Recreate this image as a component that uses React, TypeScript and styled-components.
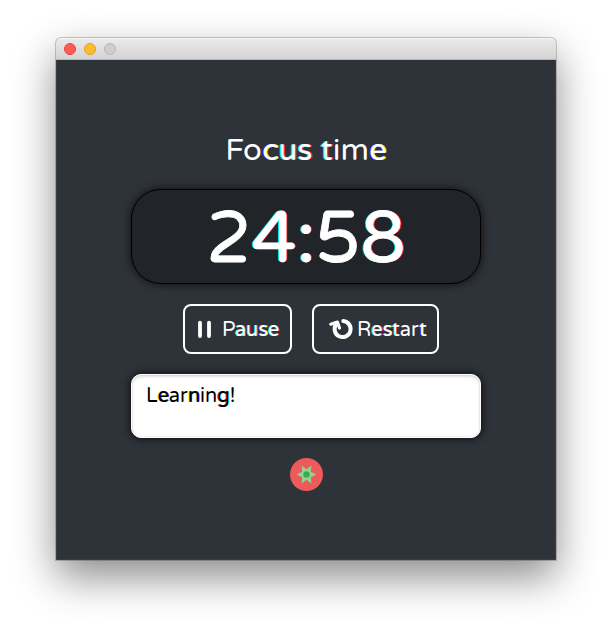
import React from "react";
import styled, { createGlobalStyle } from "styled-components";

const GlobalStyle = createGlobalStyle`
  * { box-sizing: border-box; }
  body {
    margin: 0;
    background: #fff;
    font-family: "Varela Round", Inter, "Open Sans", sans-serif;
    overflow: hidden;
  }
`;

const Desktop = styled.div`
  width: 612px;
  height: 634px;
  padding: 38px 56px 0;
  overflow: hidden;
`;

const Window = styled.main`
  width: 500px;
  height: 522px;
  border-radius: 5px 5px 0 0;
  background: #2e3239;
  box-shadow: 0 0 0 1px rgba(0, 0, 0, 0.2), 0 17px 42px rgba(0, 0, 0, 0.46);
`;

const TitleBar = styled.header`
  height: 22px;
  display: flex;
  align-items: center;
  gap: 8px;
  padding-left: 8px;
  border-radius: 5px 5px 0 0;
  border-bottom: 1px solid #b5b8b6;
  background: linear-gradient(#ebebeb, #d3d3d3);
  box-shadow: inset 0 1px 0 #f6f6f6;
`;

const TrafficLight = styled.span<{ $fill: string; $edge: string }>`
  width: 12px;
  height: 12px;
  border-radius: 50%;
  background: ${(p) => p.$fill};
  border: 1px solid ${(p) => p.$edge};
`;

const Content = styled.section`
  height: 500px;
  display: flex;
  flex-direction: column;
  align-items: center;
  border: solid rgba(255, 255, 255, 0.06);
  border-width: 0 1px 1px;
`;

const Heading = styled.h1`
  margin: 71px 0 0;
  height: 40px;
  line-height: 40px;
  font-size: 31px;
  font-weight: 400;
  letter-spacing: 0.1px;
  color: #fff;
  white-space: nowrap;
`;

const Timer = styled.div`
  width: 350px;
  height: 95px;
  margin-top: 18px;
  padding-top: 3px;
  border: 1px solid #000;
  border-radius: 30px;
  background: #212428;
  box-shadow: 0 0 8px rgba(0, 0, 0, 0.75);
  color: #fff;
  font-size: 72px;
  font-weight: 500;
  line-height: 93px;
  text-align: center;
  -webkit-text-stroke: 0.8px #fff;
`;

const Fringe = styled.span<{ $left: string; $right: string }>`
  text-shadow: -0.7px 0 0 ${(p) => p.$left}, 0.7px 0 0 ${(p) => p.$right};
  ${Timer} & {
    text-shadow: -1.3px 0 0 ${(p) => p.$left}, 1.3px 0 0 ${(p) => p.$right};
  }
  ${Heading} & {
    text-shadow: -1px 0 0 ${(p) => p.$left}, 1px 0 0 ${(p) => p.$right};
  }
`;

const Buttons = styled.div`
  display: flex;
  gap: 20px;
  margin: 20px 0 0 10px;
`;

const Button = styled.button<{ $width: number; $left: number; $gap: number }>`
  width: ${(p) => p.$width}px;
  height: 50px;
  padding: 0 0 0 ${(p) => p.$left}px;
  display: flex;
  align-items: center;
  gap: ${(p) => p.$gap}px;
  border: 2px solid #fff;
  border-radius: 8px;
  background: transparent;
  color: #fff;
  font: 400 20px/24px "Varela Round", Inter, sans-serif;
  white-space: nowrap;
  svg { display: block; flex: none; }
`;

const Label = styled.span`
  padding-top: 2px;
`;

const Note = styled.div`
  width: 350px;
  height: 64px;
  margin-top: 20px;
  padding: 9px 14px;
  border: 1px solid #fff;
  border-radius: 10px;
  background: #fff;
  box-shadow: 0 0 8px rgba(0, 0, 0, 0.85), inset 0 2px 3px rgba(0, 0, 0, 0.13),
    inset 0 0 0 1px #f3f3f3;
  color: #000;
  font-size: 20px;
  line-height: 24px;
`;

const Settings = styled.button`
  width: 33px;
  height: 33px;
  margin: 20px 0 0 1px;
  padding: 0;
  border: 0;
  border-radius: 50%;
  background: #ec5b5a;
  svg { display: block; }
`;

const cyanRed = { $left: "#00e5e5", $right: "#ff2a3c" };
const redCyan = { $left: "#ff0000", $right: "#00ffff" };
const blueYellow = { $left: "#3018ff", $right: "#ffff00" };
const yellowBlue = { $left: "#ffff00", $right: "#0000ff" };

export default function App() {
  return (
    <Desktop>
      <GlobalStyle />
      <Window>
        <TitleBar>
          <TrafficLight $fill="#fc5b57" $edge="#e2443f" />
          <TrafficLight $fill="#fdbc2f" $edge="#dfa023" />
          <TrafficLight $fill="#cecece" $edge="#b8b8b8" />
        </TitleBar>
        <Content>
          <Heading>
            Fo<Fringe {...blueYellow}>c</Fringe>
            <Fringe {...cyanRed}>us t</Fringe>im
            <Fringe {...blueYellow}>e</Fringe>
          </Heading>
          <Timer>
            2<Fringe {...cyanRed}>4:</Fringe>5<Fringe {...cyanRed}>8</Fringe>
          </Timer>
          <Buttons>
            <Button $width={109} $left={12} $gap={11}>
              <svg width="14" height="18" viewBox="0 0 14 18" stroke="#fff" strokeWidth="3.8" strokeLinecap="round">
                <path d="M3 2.6v13.4M12 2.6v13.4" />
              </svg>
              <Label>P<Fringe {...cyanRed}>au</Fringe><Fringe {...blueYellow}>s</Fringe><Fringe {...cyanRed}>e</Fringe></Label>
            </Button>
            <Button $width={127} $left={14} $gap={3}>
              <svg width="26" height="24" viewBox="0 0 26 24" fill="none" stroke="#fff" strokeLinecap="round" strokeLinejoin="round">
                <path d="M15.3 4.1A8 8 0 1 1 8.2 7.3" strokeWidth="4" />
                <path d="M2.8 7.2L9.4 5.1L11.5 11" strokeWidth="3.2" />
              </svg>
              <Label>R<Fringe {...cyanRed}>e</Fringe><Fringe {...blueYellow}>s</Fringe><Fringe {...cyanRed}>t</Fringe>ar<Fringe {...blueYellow}>t</Fringe></Label>
            </Button>
          </Buttons>
          <Note>
            L<Fringe {...yellowBlue}>e</Fringe>ar<Fringe {...yellowBlue}>n</Fringe>in<Fringe {...redCyan}>g</Fringe>!
          </Note>
          <Settings aria-label="Settings">
            <svg width="33" height="33" viewBox="0 0 33 33">
              <path d="M6.7 16.5L12.2 13.8L11.6 7.6L16.5 11.2L21.4 7.6L20.8 13.8L26.3 16.5L20.8 19.2L21.4 25.4L16.5 21.8L11.6 25.4L12.2 19.2Z" fill="#91d492" />
              <circle cx="16.5" cy="16.5" r="3.2" fill="#3ca856" />
            </svg>
          </Settings>
        </Content>
      </Window>
    </Desktop>
  );
}
